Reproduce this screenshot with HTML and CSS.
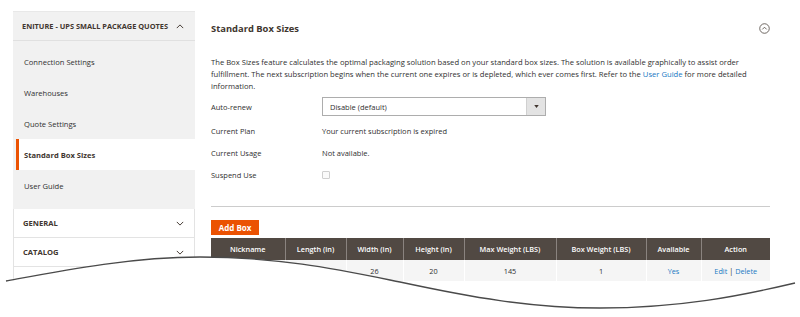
FILE: index.html
```html
<!DOCTYPE html>
<html>
<head>
<meta charset="utf-8">
<link rel="stylesheet" href="styles.css">
</head>
<body>
<div class="page">
  <aside class="sidebar">
    <div class="nav-group">
      <div class="nav-title">
        <span>ENITURE - UPS SMALL PACKAGE QUOTES</span>
        <svg class="chev" viewBox="0 0 10 6" width="8" height="5"><path d="M1 5 L5 1 L9 5" fill="none" stroke="#41362f" stroke-width="1.2"/></svg>
      </div>
      <ul class="nav-items">
        <li class="nav-item">Connection Settings</li>
        <li class="nav-item">Warehouses</li>
        <li class="nav-item">Quote Settings</li>
        <li class="nav-item active">Standard Box Sizes</li>
        <li class="nav-item">User Guide</li>
      </ul>
    </div>
    <div class="nav-section">
      <span>GENERAL</span>
      <svg class="chev" viewBox="0 0 10 6" width="8" height="5"><path d="M1 1 L5 5 L9 1" fill="none" stroke="#41362f" stroke-width="1.2"/></svg>
    </div>
    <div class="nav-section">
      <span>CATALOG</span>
      <svg class="chev" viewBox="0 0 10 6" width="8" height="5"><path d="M1 1 L5 5 L9 1" fill="none" stroke="#41362f" stroke-width="1.2"/></svg>
    </div>
    <div class="nav-section"></div>
  </aside>

  <main class="main">
    <div class="section-head">
      <h2 class="section-title">Standard Box Sizes</h2>
      <svg class="collapse" viewBox="0 0 12 12" width="11" height="11"><circle cx="6" cy="6" r="5.2" fill="none" stroke="#514943" stroke-width="0.9"/><path d="M3.6 7 L6 4.6 L8.4 7" fill="none" stroke="#514943" stroke-width="0.9"/></svg>
    </div>
    <p class="desc">The Box Sizes feature calculates the optimal packaging solution based on your standard box sizes. The solution is available graphically to assist order fulfillment. The next subscription begins when the current one expires or is depleted, which ever comes first. Refer to the <a class="link">User Guide</a> for more detailed information.</p>

    <div class="form">
      <div class="row row-select">
        <div class="label">Auto-renew</div>
        <div class="select"><span class="select-text">Disable (default)</span><span class="select-btn"><svg viewBox="0 0 6 4" width="5" height="3"><path d="M0 0 L6 0 L3 4 Z" fill="#41362f"/></svg></span></div>
      </div>
      <div class="row">
        <div class="label">Current Plan</div>
        <div class="value">Your current subscription is expired</div>
      </div>
      <div class="row">
        <div class="label">Current Usage</div>
        <div class="value">Not available.</div>
      </div>
      <div class="row">
        <div class="label">Suspend Use</div>
        <div class="value"><span class="checkbox"></span></div>
      </div>
    </div>

    <div class="divider"></div>

    <button class="btn-add">Add Box</button>

    <table class="boxes">
      <colgroup>
        <col style="width:74px"><col style="width:61px"><col style="width:57px"><col style="width:61px"><col style="width:92px"><col style="width:90px"><col style="width:55px"><col style="width:69px">
      </colgroup>
      <thead>
        <tr><th>Nickname</th><th>Length (in)</th><th>Width (in)</th><th>Height (in)</th><th>Max Weight (LBS)</th><th>Box Weight (LBS)</th><th>Available</th><th>Action</th></tr>
      </thead>
      <tbody>
        <tr><td></td><td></td><td>26</td><td>20</td><td>145</td><td>1</td><td><a class="link">Yes</a></td><td><a class="link">Edit</a> <span class="sep">|</span> <a class="link">Delete</a></td></tr>
      </tbody>
    </table>
  </main>

  <svg class="tear" viewBox="0 0 800 317" width="800" height="317">
    <path d="M0 281 L6 281 C60 271 130 257 200 257 C280 257 340 270 400 282 C470 297 530 308 600 308 C680 308 740 296 795 283 L800 283 L800 317 L0 317 Z" fill="#fff"/>
    <path d="M6 281 C60 271 130 257 200 257 C280 257 340 270 400 282 C470 297 530 308 600 308 C680 308 740 296 795 283" fill="none" stroke="#4a4a4a" stroke-width="1.3"/>
  </svg>
</div>
</body>
</html>
```

FILE: styles.css
```css
* { box-sizing: border-box; }
html, body { margin: 0; padding: 0; background: #fff; }
body {
  font-family: "Open Sans", "DejaVu Sans", sans-serif;
  color: #303030;
  width: 800px;
  height: 317px;
  overflow: hidden;
}
.page {
  position: relative;
  display: flex;
  align-items: flex-start;
  padding-top: 11px;
  width: 800px;
  height: 317px;
}
.sidebar {
  width: 182px;
  margin-left: 13px;
  flex: none;
}
.nav-group {
  background: #f1f1f1;
  border-top: 1px solid #e8e8e8;
}
.nav-title {
  height: 29px;
  display: flex;
  align-items: center;
  justify-content: space-between;
  padding: 0 11px 0 9px;
  font-size: 7.4px;
  font-weight: 700;
  color: #41362f;
  border-bottom: 1px solid #e0e0e0;
}
.chev { display: block; }
.nav-items {
  list-style: none;
  margin: 0;
  padding: 5px 0 8px 0;
}
.nav-item {
  height: 31px;
  display: flex;
  align-items: center;
  margin-left: 3px;
  border-left: 3px solid transparent;
  padding-left: 5px;
  font-size: 7.6px;
  color: #303030;
}
.nav-item.active {
  background: #fff;
  border-left-color: #eb5202;
  font-weight: 700;
  color: #41362f;
}
.nav-section {
  height: 29px;
  display: flex;
  align-items: center;
  justify-content: space-between;
  padding: 0 10px 0 9px;
  border: 1px solid #e3e3e3;
  border-top: none;
  font-size: 7.6px;
  font-weight: 700;
  color: #41362f;
  background: #fff;
}
.main {
  margin-left: 16px;
  width: 559px;
  flex: none;
}
.section-head {
  height: 34px;
  display: flex;
  align-items: center;
  justify-content: space-between;
}
.section-title {
  margin: 0;
  font-size: 9.4px;
  font-weight: 700;
  color: #41362f;
}
.desc {
  margin: 11px 0 0 0;
  font-size: 7.65px;
  line-height: 12px;
  color: #303030;
}
.link { color: #1979c3; text-decoration: none; }
.form { margin-top: 1px; }
.row {
  display: flex;
  align-items: center;
  height: 22px;
  font-size: 7.5px;
}
.row-select { height: 27px; }
.label { width: 111px; flex: none; color: #303030; }
.value { color: #303030; }
.select {
  width: 224px;
  height: 19px;
  border: 1px solid #adadad;
  display: flex;
  align-items: stretch;
  background: #fff;
}
.select-text {
  flex: 1;
  display: flex;
  align-items: center;
  padding-left: 7px;
}
.select-btn {
  width: 19px;
  background: #e3e3e3;
  border-left: 1px solid #d0d0d0;
  display: flex;
  align-items: center;
  justify-content: center;
}
.select-btn svg { display: block; }
.checkbox {
  display: block;
  width: 8px;
  height: 8px;
  border: 1px solid #cfcfcf;
  border-radius: 1px;
  background: #fafafa;
}
.divider {
  margin-top: 20px;
  height: 1px;
  border-top: 1px solid #cccccc;
}
.btn-add {
  display: block;
  margin-top: 13px;
  height: 15px;
  width: 48px;
  padding: 0;
  border: none;
  background: #eb5202;
  color: #fff;
  font-family: "Open Sans", "DejaVu Sans", sans-serif;
  font-size: 8px;
  font-weight: 700;
}
.boxes {
  margin-top: 3px;
  width: 559px;
  border-collapse: collapse;
  table-layout: fixed;
  font-size: 7.3px;
}
.boxes th {
  background: #514943;
  color: #fff;
  font-weight: 600;
  height: 22px;
  padding: 0;
  text-align: center;
  border-left: 1px solid #8a837f;
}
.boxes th:first-child { border-left: none; }
.boxes td {
  background: #f5f5f5;
  height: 21px;
  padding: 0;
  text-align: center;
  color: #303030;
  border-left: 1px solid #fff;
}
.boxes td:first-child { border-left: none; }
.sep { color: #303030; }
.tear {
  position: absolute;
  left: 0;
  top: 0;
  pointer-events: none;
}
```
